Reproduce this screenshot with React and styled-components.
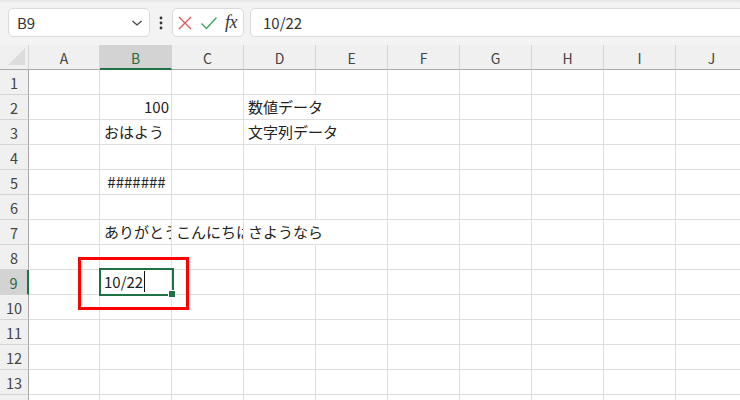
import React from "react";
import styled, { createGlobalStyle } from "styled-components";

const Global = createGlobalStyle`
  html, body { margin: 0; padding: 0; background: #fff; overflow: hidden; }
  body { font-family: "Noto Sans CJK JP", "Noto Sans", sans-serif; color: #222; }
  * { box-sizing: border-box; }
`;

const Page = styled.div`
  width: 740px;
  height: 400px;
  overflow: hidden;
  display: flex;
  flex-direction: column;
`;

const TopBar = styled.div`
  height: 45px;
  flex: none;
  background: #f3f3f3;
  box-shadow: inset 0 3px 3px -2px rgba(0, 0, 0, 0.08);
  display: flex;
  align-items: center;
  padding-left: 8px;
`;

const Box = styled.div`
  height: 29px;
  background: #fff;
  border: 1px solid #dadada;
  border-radius: 5px;
  display: flex;
  align-items: center;
`;

const NameBox = styled(Box)`
  width: 142px;
  padding: 0 6px 0 8px;
  justify-content: space-between;
  font-size: 15px;
  color: #333;
`;

const Dots = styled.div`
  width: 22px;
  display: flex;
  justify-content: center;
`;

const FxBox = styled(Box)`
  width: 72px;
  padding: 0 6px 0 4px;
  justify-content: space-between;
`;

const Fx = styled.span`
  font-family: "Liberation Serif", "DejaVu Serif", serif;
  font-style: italic;
  font-size: 18px;
  color: #333;
  letter-spacing: -0.5px;
`;

const FormulaInput = styled(Box)`
  margin-left: 6px;
  flex: 1;
  border-right: none;
  border-radius: 5px 0 0 5px;
  padding-left: 12px;
  font-size: 15px;
  color: #333;
`;

const Sheet = styled.div`
  position: relative;
  display: grid;
  grid-template-columns: 29px 71px repeat(9, 72px);
  grid-auto-rows: 25px;
  grid-template-rows: 25px;
  width: 748px;
`;

const Corner = styled.div`
  background: #f0f0f0;
  border-right: 1px solid #d4d4d4;
  border-bottom: 1px solid #a8a8a8;
  position: relative;
  &::after {
    content: "";
    position: absolute;
    left: 8px;
    top: 3px;
    width: 17px;
    height: 17px;
    background: #dcdcdc;
    clip-path: polygon(100% 0, 100% 100%, 0 100%);
  }
`;

const ColHead = styled.div`
  background: ${(p) => (p.$active ? "#d3d3d3" : "#f0f0f0")};
  border-right: 1px solid #d4d4d4;
  border-bottom: ${(p) => (p.$active ? "2px solid #1e7145" : "1px solid #a8a8a8")};
  display: flex;
  align-items: center;
  justify-content: center;
  font-size: 14px;
  color: ${(p) => (p.$active ? "#1e6e42" : "#444")};
  padding-top: ${(p) => (p.$active ? "2px" : "1px")};
`;

const RowHead = styled.div`
  background: ${(p) => (p.$active ? "#d3d3d3" : "#f0f0f0")};
  border-right: ${(p) => (p.$active ? "2px solid #1e7145" : "1px solid #a6a6a6")};
  border-bottom: 1px solid #d4d4d4;
  display: flex;
  align-items: center;
  justify-content: center;
  font-size: 14.5px;
  color: ${(p) => (p.$active ? "#1e6e42" : "#444")};
`;

const Cell = styled.div`
  border-right: 1px solid ${(p) => (p.$spill ? "transparent" : "#dedede")};
  border-bottom: 1px solid #dedede;
  display: flex;
  align-items: center;
  justify-content: ${(p) =>
    p.$align === "right" ? "flex-end" : p.$align === "center" ? "center" : "flex-start"};
  padding: 0 2px 1px 4px;
  font-size: 15px;
  color: #222;
  white-space: nowrap;
  overflow: ${(p) => (p.$spill ? "visible" : "hidden")};
  position: relative;
  z-index: ${(p) => (p.$spill ? 1 : "auto")};
`;

const Selection = styled.div`
  position: absolute;
  left: 99px;
  top: 223px;
  width: 75px;
  height: 28px;
  border: 2px solid #1e7145;
  z-index: 2;
  &::after {
    content: "";
    position: absolute;
    right: -4px;
    bottom: -4px;
    width: 6px;
    height: 6px;
    background: #1e7145;
    border: 1px solid #fff;
  }
`;

const Caret = styled.span`
  display: inline-block;
  width: 1px;
  height: 21px;
  background: #111;
  margin-left: 1px;
`;

const Highlight = styled.div`
  position: absolute;
  left: 78px;
  top: 212px;
  width: 111px;
  height: 53px;
  border: 3px solid #ff0000;
  z-index: 3;
`;

const cols = ["A", "B", "C", "D", "E", "F", "G", "H", "I", "J"];

const data = {
  "B2": { v: "100", a: "right" },
  "D2": { v: "数値データ", s: true },
  "B3": { v: "おはよう" },
  "D3": { v: "文字列データ", s: true },
  "B5": { v: "#######", a: "center" },
  "B7": { v: "ありがとう" },
  "C7": { v: "こんにちは" },
  "D7": { v: "さようなら", s: true },
};

function Chevron() {
  return (
    <svg width="12" height="8" viewBox="0 0 12 8">
      <path d="M1.5 2 L6 6 L10.5 2" fill="none" stroke="#444" strokeWidth="1.3" />
    </svg>
  );
}

function VDots() {
  return (
    <svg width="4" height="14" viewBox="0 0 4 14">
      <circle cx="2" cy="2" r="1.4" fill="#333" />
      <circle cx="2" cy="7" r="1.4" fill="#333" />
      <circle cx="2" cy="12" r="1.4" fill="#333" />
    </svg>
  );
}

function CrossIcon() {
  return (
    <svg width="16" height="16" viewBox="0 0 16 16">
      <path d="M2 2 L14 14 M14 2 L2 14" stroke="#e0545a" strokeWidth="1.3" fill="none" />
    </svg>
  );
}

function CheckIcon() {
  return (
    <svg width="18" height="16" viewBox="0 0 18 16">
      <path d="M1.5 8.5 L6.5 13.5 L16.5 2.5" stroke="#3ea35f" strokeWidth="1.3" fill="none" />
    </svg>
  );
}

export default function App() {
  const rows = Array.from({ length: 14 }, (_, i) => i + 1);
  return (
    <Page>
      <Global />
      <TopBar>
        <NameBox>
          <span>B9</span>
          <Chevron />
        </NameBox>
        <Dots>
          <VDots />
        </Dots>
        <FxBox>
          <CrossIcon />
          <CheckIcon />
          <Fx>fx</Fx>
        </FxBox>
        <FormulaInput>10/22</FormulaInput>
      </TopBar>
      <Sheet>
        <Corner />
        {cols.map((c) => (
          <ColHead key={c} $active={c === "B"}>
            {c}
          </ColHead>
        ))}
        {rows.map((r) => (
          <React.Fragment key={r}>
            <RowHead $active={r === 9}>{r}</RowHead>
            {cols.map((c) => {
              const d = data[c + r];
              if (c === "B" && r === 9) {
                return (
                  <Cell key={c}>
                    10/22
                    <Caret />
                  </Cell>
                );
              }
              return (
                <Cell key={c} $align={d && d.a} $spill={d && d.s}>
                  {d ? d.v : ""}
                </Cell>
              );
            })}
          </React.Fragment>
        ))}
        <Selection />
        <Highlight />
      </Sheet>
    </Page>
  );
}
